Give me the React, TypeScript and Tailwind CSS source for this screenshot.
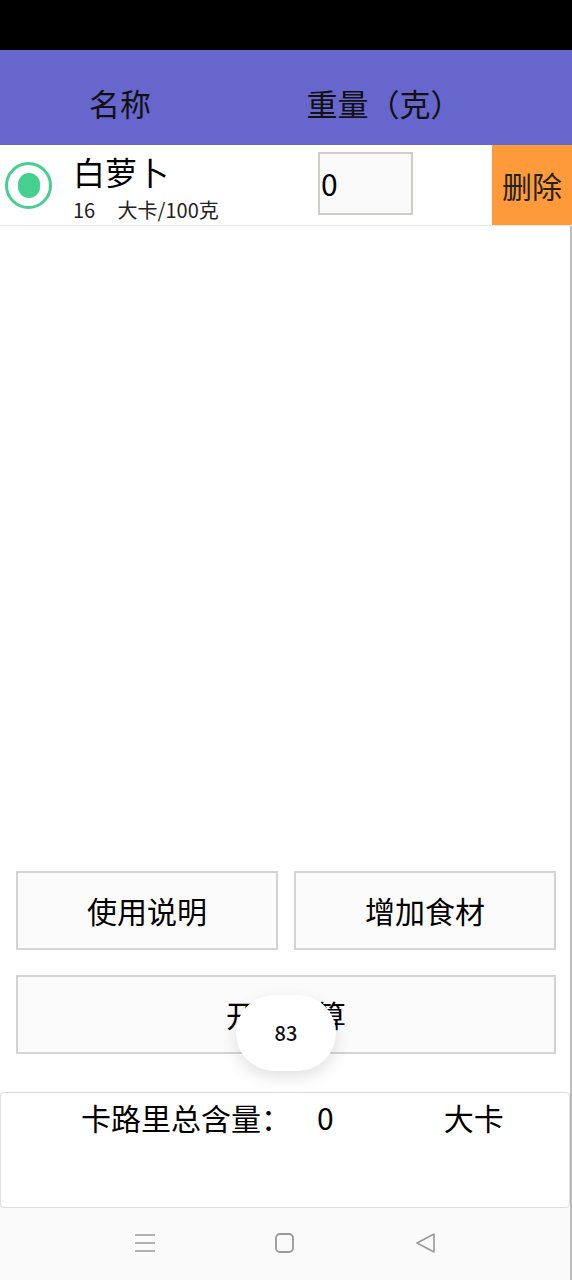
const font = { fontFamily: '"Noto Sans CJK SC", "Noto Sans", sans-serif' }

function RadioDot() {
  return (
    <div className="flex size-[47px] items-center justify-center rounded-full border-[3px] border-[#46d08f]">
      <div className="h-[25px] w-[22px] rounded-full bg-[#46d08f]" />
    </div>
  )
}

function OutlineButton({ label, className = '' }: { label: string; className?: string }) {
  return (
    <div
      className={`flex h-[79px] items-center justify-center border-2 border-[#d4d4d4] bg-[#fbfbfb] text-[30px] text-black ${className}`}
    >
      {label}
    </div>
  )
}

export default function App() {
  return (
    <div className="flex h-[1280px] w-[572px] flex-col overflow-hidden bg-white" style={font}>
      {/* status bar */}
      <div className="h-[50px] bg-black" />

      {/* table header */}
      <div className="flex h-[95px] items-center bg-[#6666cc] pt-[12px] text-[31px] text-[#111]">
        <div className="w-[240px] text-center">名称</div>
        <div className="w-[288px] text-center">重量（克）</div>
      </div>

      {/* food row */}
      <div className="flex h-[81px] items-stretch border-b border-[#e8e8e8]">
        <div className="flex items-center pl-[5px]">
          <RadioDot />
        </div>
        <div className="flex w-[266px] flex-col pl-[21px] pt-[4px]">
          <span className="text-[32px] leading-[44px] text-black">白萝卜</span>
          <span className="whitespace-pre pt-[4px] text-[20px] leading-[26px] text-[#222]">16     大卡/100克</span>
        </div>
        <div className="flex items-center pb-[4px]">
          <div className="flex h-[63px] w-[95px] items-center border-2 border-[#d0ccc8] bg-[#fafafa] pl-[1px] text-[30px] text-black">
            0
          </div>
        </div>
        <div className="ml-auto flex w-[80px] items-center justify-center bg-[#ff9a3a] text-[30px] text-[#222]">
          删除
        </div>
      </div>

      {/* body */}
      <div className="relative flex flex-1 flex-col border-r-2 border-[#bdbdbd]">
        <div className="h-[645px]" />
        <div className="grid grid-cols-2 gap-[16px] pl-[16px] pr-[14px]">
          <OutlineButton label="使用说明" />
          <OutlineButton label="增加食材" />
        </div>
        <div className="pl-[16px] pr-[14px] pt-[25px]">
          <OutlineButton label="开始计算" />
        </div>

        {/* floating counter */}
        <div className="absolute left-[236px] top-[769px] flex h-[76px] w-[100px] items-center justify-center rounded-full bg-white text-[20px] font-medium text-[#111] shadow-[0_6px_16px_rgba(0,0,0,0.12)]">
          83
        </div>

        <div className="mt-[38px] flex h-[116px] rounded-[4px] border border-[#dedede] bg-white shadow-[0_1px_3px_rgba(0,0,0,0.08)]">
          <div className="flex h-[48px] items-center text-[30px] text-black">
            <span className="pl-[80px]">卡路里总含量：</span>
            <span className="pl-[26px]">0</span>
            <span className="pl-[110px]">大卡</span>
          </div>
        </div>

        {/* navigation bar */}
        <div className="flex flex-1 items-center justify-center gap-[104px] bg-[#fafafa] pb-[2px]">
          <svg width="36" height="36" viewBox="0 0 36 36" fill="none" stroke="#999" strokeWidth="1.6">
            <path d="M8 10h20M8 18h20M8 26h20" />
          </svg>
          <svg width="36" height="36" viewBox="0 0 36 36" fill="none" stroke="#999" strokeWidth="1.8">
            <rect x="9" y="9" width="17" height="18" rx="4" />
          </svg>
          <svg width="36" height="36" viewBox="0 0 36 36" fill="none" stroke="#999" strokeWidth="1.6" strokeLinejoin="round">
            <path d="M27 9L10 18l17 9z" />
          </svg>
        </div>
      </div>
    </div>
  )
}
